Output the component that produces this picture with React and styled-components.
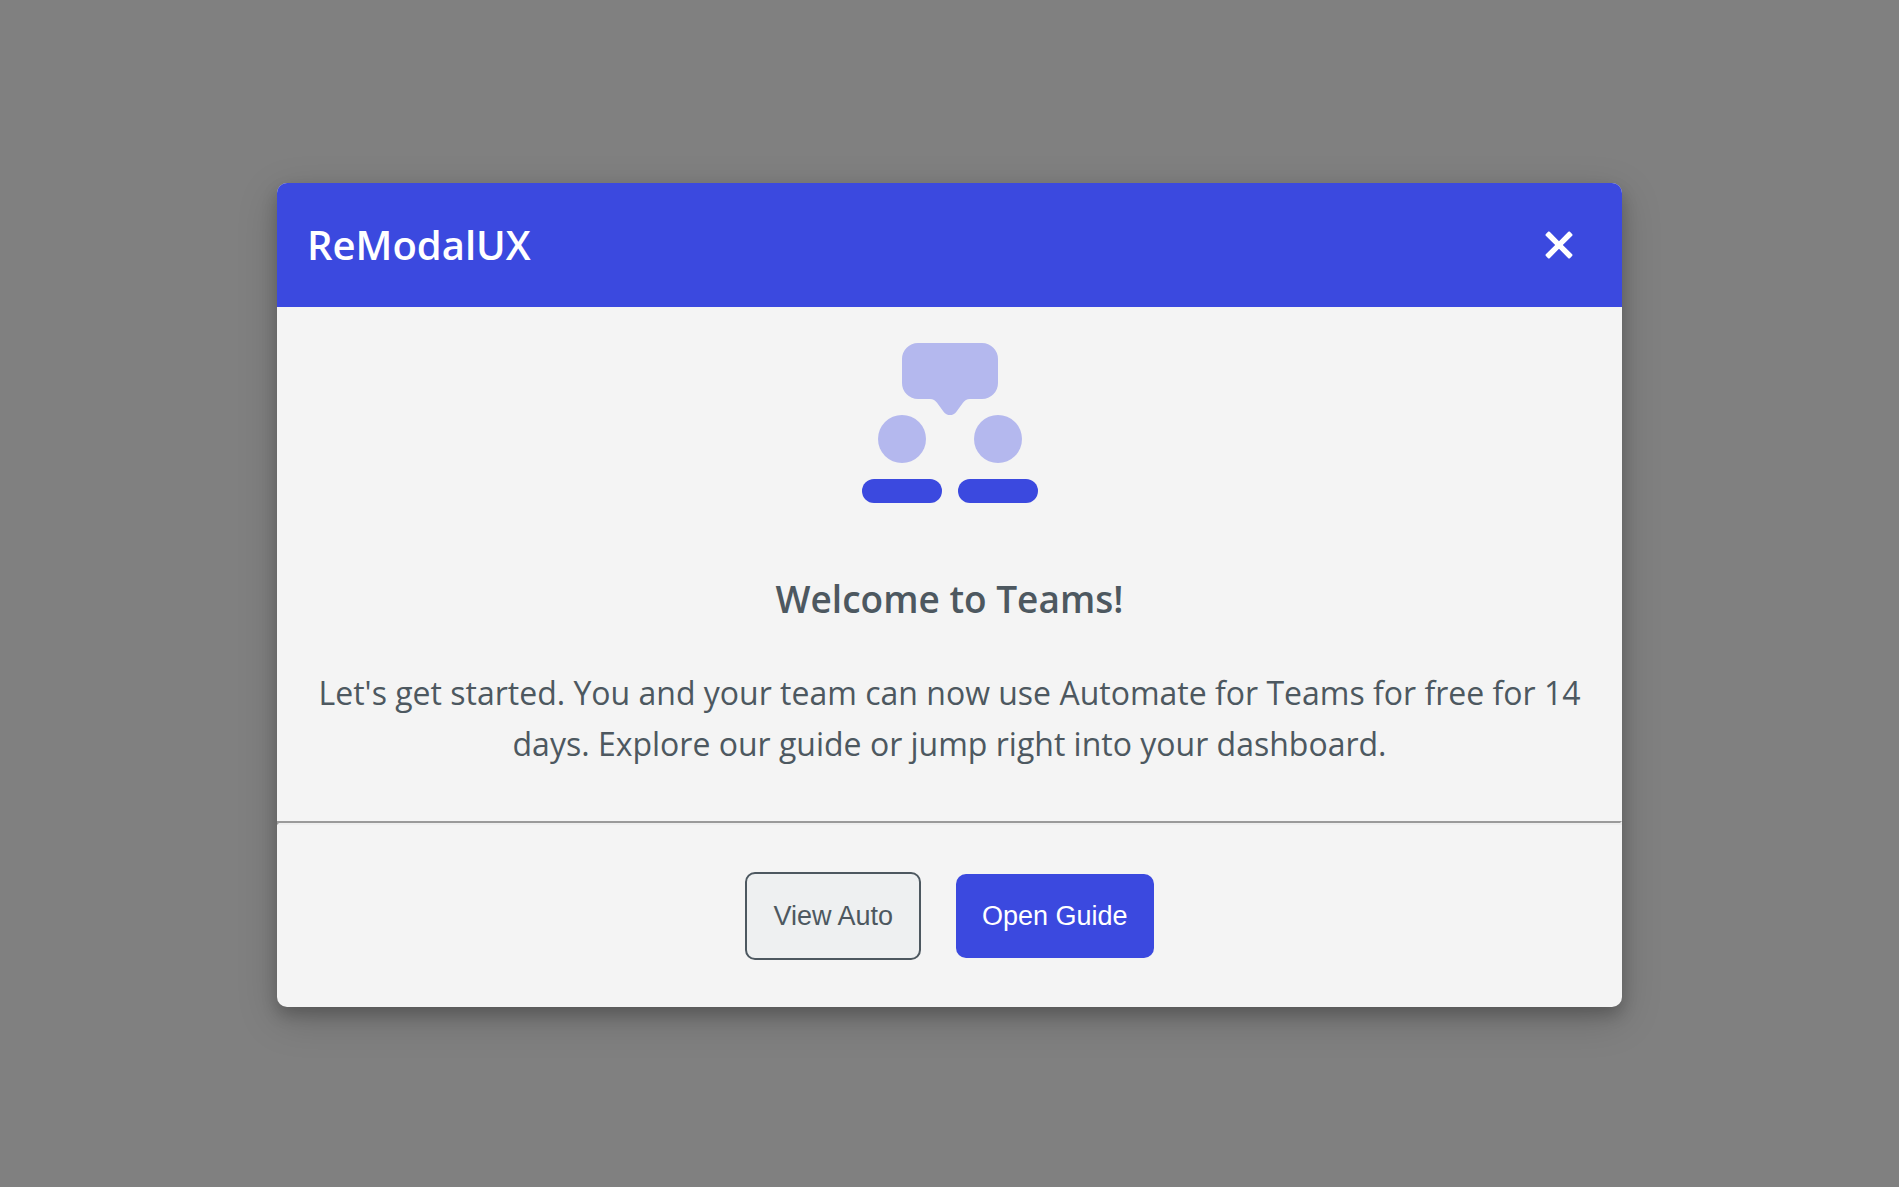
import React, { useState } from "react";
import styled, { createGlobalStyle } from "styled-components";

const GlobalStyle = createGlobalStyle`
  *, *::before, *::after { box-sizing: border-box; }
  body {
    margin: 0;
    background: #808080;
    color: #4d5860;
    font-family: "Open Sans", "Noto Sans", sans-serif;
  }
`;

const Overlay = styled.div`
  min-height: 100vh;
  padding-top: 3px;
  display: flex;
  align-items: center;
  justify-content: center;
  background: #808080;
`;

const Dialog = styled.section`
  width: 90%;
  max-width: 1345px;
  border-radius: 10px;
  overflow: hidden;
  background: #f4f4f4;
  box-shadow: 0 8px 16px rgba(0, 0, 0, 0.2), 0 12px 40px rgba(0, 0, 0, 0.19);
`;

const Header = styled.header`
  display: flex;
  align-items: center;
  justify-content: space-between;
  padding: 30px 47px 30px 30px;
  background: #3b49df;
  color: #fff;
`;

const Title = styled.h1`
  margin: 0;
  font-size: 40px;
  line-height: 64px;
  font-weight: 600;
`;

const CloseButton = styled.button`
  display: flex;
  padding: 0;
  border: 0;
  background: none;
  color: inherit;
  cursor: pointer;
`;

const Body = styled.div`
  display: flex;
  flex-direction: column;
  align-items: center;
  padding: 20px 32px 52px;
  text-align: center;
`;

const Heading = styled.h2`
  margin: 50px 0 38px;
  font-size: 37px;
  line-height: 60px;
  font-weight: 600;
`;

const Message = styled.p`
  margin: 0;
  font-size: 32px;
  line-height: 51px;
`;

const Divider = styled.hr`
  margin: 0;
  border: 2px solid;
  border-color: #9a9a9a #eeeeee #eeeeee #9a9a9a;
`;

const Footer = styled.footer`
  display: flex;
  flex-wrap: wrap;
  align-items: center;
  justify-content: center;
  gap: 35px;
  padding: 47px 32px;
`;

const Button = styled.button`
  padding: 26px;
  border: ${({ $primary }) => ($primary ? "0" : "2px solid #4d5860")};
  border-radius: 10px;
  background: ${({ $primary }) => ($primary ? "#3b49df" : "#eef0f1")};
  color: ${({ $primary }) => ($primary ? "#fff" : "#4d5860")};
  font-family: "Liberation Sans", Arial, sans-serif;
  font-size: 27px;
  line-height: 32px;
  cursor: pointer;
`;

function CloseIcon() {
  return (
    <svg width="32" height="32" viewBox="0 0 32 32" fill="currentColor" aria-hidden="true">
      <path d="M5.3 2.6Q6 2.2 6.7 2.8L16 12.2 25.3 2.8Q26 2.2 26.7 2.6L29.3 5.2Q29.8 6 29.2 6.7L19.8 16 29.2 25.3Q29.8 26 29.3 26.8L26.7 29.4Q26 29.8 25.3 29.2L16 19.8 6.7 29.2Q6 29.8 5.3 29.4L2.7 26.8Q2.2 26 2.8 25.3L12.2 16 2.8 6.7Q2.2 6 2.7 5.2Z" />
    </svg>
  );
}

function TeamIcon() {
  return (
    <svg width="192" height="192" viewBox="0 0 24 24" aria-hidden="true">
      <g fill="#b4b8ee">
        <path d="M8 2h8a2 2 0 0 1 2 2v3a2 2 0 0 1-2 2h-1.5c-.4 0-.65.15-.88.48l-.82 1.1c-.4.56-1.2.56-1.6 0l-.82-1.1C10.15 9.15 9.9 9 9.5 9H8a2 2 0 0 1-2-2V4a2 2 0 0 1 2-2z" />
        <circle cx="6" cy="14" r="3" />
        <circle cx="18" cy="14" r="3" />
      </g>
      <g fill="#3b49df">
        <rect x="1" y="19" width="10" height="3" rx="1.5" />
        <rect x="13" y="19" width="10" height="3" rx="1.5" />
      </g>
    </svg>
  );
}

export default function App() {
  const [open, setOpen] = useState(true);
  const close = () => setOpen(false);

  return (
    <>
      <GlobalStyle />
      <Overlay>
        {open && (
          <Dialog role="dialog" aria-modal="true" aria-labelledby="modal-title">
            <Header>
              <Title id="modal-title">ReModalUX</Title>
              <CloseButton type="button" aria-label="Close" onClick={close}>
                <CloseIcon />
              </CloseButton>
            </Header>
            <Body>
              <TeamIcon />
              <Heading>Welcome to Teams!</Heading>
              <Message>
                Let's get started. You and your team can now use Automate for Teams for free for 14 days.
                Explore our guide or jump right into your dashboard.
              </Message>
            </Body>
            <Divider />
            <Footer>
              <Button type="button">View Auto</Button>
              <Button type="button" $primary>Open Guide</Button>
            </Footer>
          </Dialog>
        )}
      </Overlay>
    </>
  );
}
